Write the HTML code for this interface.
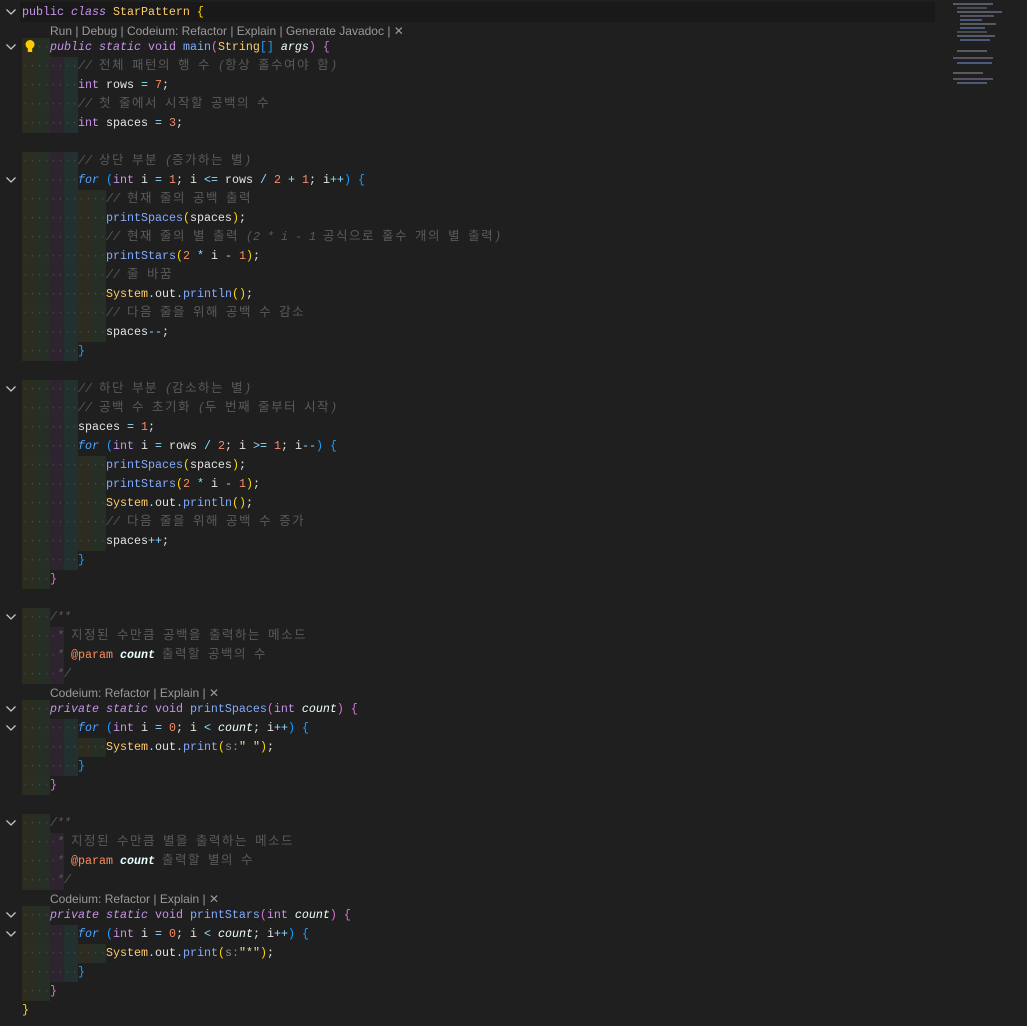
<!DOCTYPE html>
<html><head><meta charset="utf-8"><style>
html,body{margin:0;padding:0;background:#1f1f1f;width:1027px;height:1026px;overflow:hidden}
#ed{position:absolute;left:22px;top:3px;font-family:"Liberation Mono","Noto Sans CJK KR",monospace;font-size:11.67px;color:#e4e4e4}
.l{height:19px;line-height:19px;white-space:pre;overflow:hidden}
.lens{height:16px;line-height:18px;white-space:pre;font-family:"Liberation Sans","DejaVu Sans",sans-serif;font-size:12px;color:#9a9a9a;padding-left:28px}
i{font-style:normal;color:#444;display:inline-block;width:14px;height:19px;vertical-align:top}
.a{background:#2c2c20}.b{background:#252f25}.c{background:#2e2430}.d{background:#22302f}
span.c{display:inline-block;width:14px;height:19px;vertical-align:top}
.k{color:#c792ea}.it{font-style:italic}
.f{color:#4fa6ff;font-style:italic}
.t{color:#ffcb6b}.m{color:#82aaff}.o{color:#89ddff}.n{color:#f78c6c}
.cm{color:#5a5a5a;font-style:italic}
b.ko{font-weight:normal;font-family:"Noto Sans CJK KR",sans-serif;font-size:12.5px;letter-spacing:1.5px;font-style:normal;line-height:0}
.p{font-style:italic;color:#eeffff}.pb{font-style:italic;font-weight:bold;color:#eeffff}
.pa{color:#ff8b5a}
.b1{color:#ffd700}.b2{color:#da70d6}.b3{color:#179fff}
.h{color:#8b8b8b}.s{color:#e8d9a6}
.chev{position:absolute;left:5px;width:12px;height:8px}
#band{position:absolute;left:20px;top:2px;width:915px;height:20px;background:#191919}
#mm div{position:absolute;height:2px}
</style></head><body>
<div id="band"></div>
<svg class="chev" style="top:8px" viewBox="0 0 12 8"><polyline points="1.5,1.5 6,6 10.5,1.5" fill="none" stroke="#c5c5c5" stroke-width="1.3"/></svg>
<svg class="chev" style="top:43px" viewBox="0 0 12 8"><polyline points="1.5,1.5 6,6 10.5,1.5" fill="none" stroke="#c5c5c5" stroke-width="1.3"/></svg>
<svg class="chev" style="top:176px" viewBox="0 0 12 8"><polyline points="1.5,1.5 6,6 10.5,1.5" fill="none" stroke="#c5c5c5" stroke-width="1.3"/></svg>
<svg class="chev" style="top:385px" viewBox="0 0 12 8"><polyline points="1.5,1.5 6,6 10.5,1.5" fill="none" stroke="#c5c5c5" stroke-width="1.3"/></svg>
<svg class="chev" style="top:613px" viewBox="0 0 12 8"><polyline points="1.5,1.5 6,6 10.5,1.5" fill="none" stroke="#c5c5c5" stroke-width="1.3"/></svg>
<svg class="chev" style="top:705px" viewBox="0 0 12 8"><polyline points="1.5,1.5 6,6 10.5,1.5" fill="none" stroke="#c5c5c5" stroke-width="1.3"/></svg>
<svg class="chev" style="top:724px" viewBox="0 0 12 8"><polyline points="1.5,1.5 6,6 10.5,1.5" fill="none" stroke="#c5c5c5" stroke-width="1.3"/></svg>
<svg class="chev" style="top:819px" viewBox="0 0 12 8"><polyline points="1.5,1.5 6,6 10.5,1.5" fill="none" stroke="#c5c5c5" stroke-width="1.3"/></svg>
<svg class="chev" style="top:911px" viewBox="0 0 12 8"><polyline points="1.5,1.5 6,6 10.5,1.5" fill="none" stroke="#c5c5c5" stroke-width="1.3"/></svg>
<svg class="chev" style="top:930px" viewBox="0 0 12 8"><polyline points="1.5,1.5 6,6 10.5,1.5" fill="none" stroke="#c5c5c5" stroke-width="1.3"/></svg>
<div id="ed">
<div class="l"><span class="k">public</span> <span class="k it">class</span> <span class="t">StarPattern</span> <span class="b1">{</span></div>
<div class="lens">Run | Debug | Codeium: Refactor | Explain | Generate Javadoc | ✕</div>
<div class="l"><i class="a"> </i><i class="b">··</i><span class="k it">public</span> <span class="k it">static</span> <span class="k">void</span> <span class="m">main</span><span class="b2">(</span><span class="t">String</span><span class="b3">[]</span> <span class="p">args</span><span class="b2">)</span> <span class="b2">{</span></div>
<div class="l"><i class="a">··</i><i class="b">··</i><i class="c">··</i><i class="d">··</i><span class="cm">// <b class="ko">전체</b> <b class="ko">패턴의</b> <b class="ko">행</b> <b class="ko">수</b> (<b class="ko">항상</b> <b class="ko">홀수여야</b> <b class="ko">함</b>)</span></div>
<div class="l"><i class="a">··</i><i class="b">··</i><i class="c">··</i><i class="d">··</i><span class="k">int</span> rows <span class="o">=</span> <span class="n">7</span>;</div>
<div class="l"><i class="a">··</i><i class="b">··</i><i class="c">··</i><i class="d">··</i><span class="cm">// <b class="ko">첫</b> <b class="ko">줄에서</b> <b class="ko">시작할</b> <b class="ko">공백의</b> <b class="ko">수</b></span></div>
<div class="l"><i class="a">··</i><i class="b">··</i><i class="c">··</i><i class="d">··</i><span class="k">int</span> spaces <span class="o">=</span> <span class="n">3</span>;</div>
<div class="l"> </div>
<div class="l"><i class="a">··</i><i class="b">··</i><i class="c">··</i><i class="d">··</i><span class="cm">// <b class="ko">상단</b> <b class="ko">부분</b> (<b class="ko">증가하는</b> <b class="ko">별</b>)</span></div>
<div class="l"><i class="a">··</i><i class="b">··</i><i class="c">··</i><i class="d">··</i><span class="f">for</span> <span class="b3">(</span><span class="k">int</span> i <span class="o">=</span> <span class="n">1</span>; i <span class="o">&lt;=</span> rows <span class="o">/</span> <span class="n">2</span> <span class="o">+</span> <span class="n">1</span>; i<span class="o">++</span><span class="b3">)</span> <span class="b3">{</span></div>
<div class="l"><i class="a">··</i><i class="b">··</i><i class="c">··</i><i class="d">··</i><i class="a">··</i><i class="b">··</i><span class="cm">// <b class="ko">현재</b> <b class="ko">줄의</b> <b class="ko">공백</b> <b class="ko">출력</b></span></div>
<div class="l"><i class="a">··</i><i class="b">··</i><i class="c">··</i><i class="d">··</i><i class="a">··</i><i class="b">··</i><span class="m">printSpaces</span><span class="b1">(</span>spaces<span class="b1">)</span>;</div>
<div class="l"><i class="a">··</i><i class="b">··</i><i class="c">··</i><i class="d">··</i><i class="a">··</i><i class="b">··</i><span class="cm">// <b class="ko">현재</b> <b class="ko">줄의</b> <b class="ko">별</b> <b class="ko">출력</b> (2 * i - 1 <b class="ko">공식으로</b> <b class="ko">홀수</b> <b class="ko">개의</b> <b class="ko">별</b> <b class="ko">출력</b>)</span></div>
<div class="l"><i class="a">··</i><i class="b">··</i><i class="c">··</i><i class="d">··</i><i class="a">··</i><i class="b">··</i><span class="m">printStars</span><span class="b1">(</span><span class="n">2</span> <span class="o">*</span> i <span class="o">-</span> <span class="n">1</span><span class="b1">)</span>;</div>
<div class="l"><i class="a">··</i><i class="b">··</i><i class="c">··</i><i class="d">··</i><i class="a">··</i><i class="b">··</i><span class="cm">// <b class="ko">줄</b> <b class="ko">바꿈</b></span></div>
<div class="l"><i class="a">··</i><i class="b">··</i><i class="c">··</i><i class="d">··</i><i class="a">··</i><i class="b">··</i><span class="t">System</span><span class="o">.</span>out<span class="o">.</span><span class="m">println</span><span class="b1">()</span>;</div>
<div class="l"><i class="a">··</i><i class="b">··</i><i class="c">··</i><i class="d">··</i><i class="a">··</i><i class="b">··</i><span class="cm">// <b class="ko">다음</b> <b class="ko">줄을</b> <b class="ko">위해</b> <b class="ko">공백</b> <b class="ko">수</b> <b class="ko">감소</b></span></div>
<div class="l"><i class="a">··</i><i class="b">··</i><i class="c">··</i><i class="d">··</i><i class="a">··</i><i class="b">··</i>spaces<span class="o">--</span>;</div>
<div class="l"><i class="a">··</i><i class="b">··</i><i class="c">··</i><i class="d">··</i><span class="b3">}</span></div>
<div class="l"> </div>
<div class="l"><i class="a">··</i><i class="b">··</i><i class="c">··</i><i class="d">··</i><span class="cm">// <b class="ko">하단</b> <b class="ko">부분</b> (<b class="ko">감소하는</b> <b class="ko">별</b>)</span></div>
<div class="l"><i class="a">··</i><i class="b">··</i><i class="c">··</i><i class="d">··</i><span class="cm">// <b class="ko">공백</b> <b class="ko">수</b> <b class="ko">초기화</b> (<b class="ko">두</b> <b class="ko">번째</b> <b class="ko">줄부터</b> <b class="ko">시작</b>)</span></div>
<div class="l"><i class="a">··</i><i class="b">··</i><i class="c">··</i><i class="d">··</i>spaces <span class="o">=</span> <span class="n">1</span>;</div>
<div class="l"><i class="a">··</i><i class="b">··</i><i class="c">··</i><i class="d">··</i><span class="f">for</span> <span class="b3">(</span><span class="k">int</span> i <span class="o">=</span> rows <span class="o">/</span> <span class="n">2</span>; i <span class="o">&gt;=</span> <span class="n">1</span>; i<span class="o">--</span><span class="b3">)</span> <span class="b3">{</span></div>
<div class="l"><i class="a">··</i><i class="b">··</i><i class="c">··</i><i class="d">··</i><i class="a">··</i><i class="b">··</i><span class="m">printSpaces</span><span class="b1">(</span>spaces<span class="b1">)</span>;</div>
<div class="l"><i class="a">··</i><i class="b">··</i><i class="c">··</i><i class="d">··</i><i class="a">··</i><i class="b">··</i><span class="m">printStars</span><span class="b1">(</span><span class="n">2</span> <span class="o">*</span> i <span class="o">-</span> <span class="n">1</span><span class="b1">)</span>;</div>
<div class="l"><i class="a">··</i><i class="b">··</i><i class="c">··</i><i class="d">··</i><i class="a">··</i><i class="b">··</i><span class="t">System</span><span class="o">.</span>out<span class="o">.</span><span class="m">println</span><span class="b1">()</span>;</div>
<div class="l"><i class="a">··</i><i class="b">··</i><i class="c">··</i><i class="d">··</i><i class="a">··</i><i class="b">··</i><span class="cm">// <b class="ko">다음</b> <b class="ko">줄을</b> <b class="ko">위해</b> <b class="ko">공백</b> <b class="ko">수</b> <b class="ko">증가</b></span></div>
<div class="l"><i class="a">··</i><i class="b">··</i><i class="c">··</i><i class="d">··</i><i class="a">··</i><i class="b">··</i>spaces<span class="o">++</span>;</div>
<div class="l"><i class="a">··</i><i class="b">··</i><i class="c">··</i><i class="d">··</i><span class="b3">}</span></div>
<div class="l"><i class="a">··</i><i class="b">··</i><span class="b2">}</span></div>
<div class="l"> </div>
<div class="l"><i class="a">··</i><i class="b">··</i><span class="cm">/**</span></div>
<div class="l"><i class="a">··</i><i class="b">··</i><span class="c"><span style="color:#444">·</span><span class="cm">*</span></span><span class="cm"> <b class="ko">지정된</b> <b class="ko">수만큼</b> <b class="ko">공백을</b> <b class="ko">출력하는</b> <b class="ko">메소드</b></span></div>
<div class="l"><i class="a">··</i><i class="b">··</i><span class="c"><span style="color:#444">·</span><span class="cm">*</span></span> <span class="pa">@param</span> <span class="pb">count</span> <span class="cm"><b class="ko">출력할</b> <b class="ko">공백의</b> <b class="ko">수</b></span></div>
<div class="l"><i class="a">··</i><i class="b">··</i><span class="c"><span style="color:#444">·</span><span class="cm">*</span></span><span class="cm">/</span></div>
<div class="lens">Codeium: Refactor | Explain | ✕</div>
<div class="l"><i class="a">··</i><i class="b">··</i><span class="k it">private</span> <span class="k it">static</span> <span class="k">void</span> <span class="m">printSpaces</span><span class="b2">(</span><span class="k">int</span> <span class="p">count</span><span class="b2">)</span> <span class="b2">{</span></div>
<div class="l"><i class="a">··</i><i class="b">··</i><i class="c">··</i><i class="d">··</i><span class="f">for</span> <span class="b3">(</span><span class="k">int</span> i <span class="o">=</span> <span class="n">0</span>; i <span class="o">&lt;</span> <span class="p">count</span>; i<span class="o">++</span><span class="b3">)</span> <span class="b3">{</span></div>
<div class="l"><i class="a">··</i><i class="b">··</i><i class="c">··</i><i class="d">··</i><i class="a">··</i><i class="b">··</i><span class="t">System</span><span class="o">.</span>out<span class="o">.</span><span class="m">print</span><span class="b1">(</span><span class="h">s:</span><span class="s">" "</span><span class="b1">)</span>;</div>
<div class="l"><i class="a">··</i><i class="b">··</i><i class="c">··</i><i class="d">··</i><span class="b3">}</span></div>
<div class="l"><i class="a">··</i><i class="b">··</i><span class="b2">}</span></div>
<div class="l"> </div>
<div class="l"><i class="a">··</i><i class="b">··</i><span class="cm">/**</span></div>
<div class="l"><i class="a">··</i><i class="b">··</i><span class="c"><span style="color:#444">·</span><span class="cm">*</span></span><span class="cm"> <b class="ko">지정된</b> <b class="ko">수만큼</b> <b class="ko">별을</b> <b class="ko">출력하는</b> <b class="ko">메소드</b></span></div>
<div class="l"><i class="a">··</i><i class="b">··</i><span class="c"><span style="color:#444">·</span><span class="cm">*</span></span> <span class="pa">@param</span> <span class="pb">count</span> <span class="cm"><b class="ko">출력할</b> <b class="ko">별의</b> <b class="ko">수</b></span></div>
<div class="l"><i class="a">··</i><i class="b">··</i><span class="c"><span style="color:#444">·</span><span class="cm">*</span></span><span class="cm">/</span></div>
<div class="lens">Codeium: Refactor | Explain | ✕</div>
<div class="l"><i class="a">··</i><i class="b">··</i><span class="k it">private</span> <span class="k it">static</span> <span class="k">void</span> <span class="m">printStars</span><span class="b2">(</span><span class="k">int</span> <span class="p">count</span><span class="b2">)</span> <span class="b2">{</span></div>
<div class="l"><i class="a">··</i><i class="b">··</i><i class="c">··</i><i class="d">··</i><span class="f">for</span> <span class="b3">(</span><span class="k">int</span> i <span class="o">=</span> <span class="n">0</span>; i <span class="o">&lt;</span> <span class="p">count</span>; i<span class="o">++</span><span class="b3">)</span> <span class="b3">{</span></div>
<div class="l"><i class="a">··</i><i class="b">··</i><i class="c">··</i><i class="d">··</i><i class="a">··</i><i class="b">··</i><span class="t">System</span><span class="o">.</span>out<span class="o">.</span><span class="m">print</span><span class="b1">(</span><span class="h">s:</span><span class="s">"*"</span><span class="b1">)</span>;</div>
<div class="l"><i class="a">··</i><i class="b">··</i><i class="c">··</i><i class="d">··</i><span class="b3">}</span></div>
<div class="l"><i class="a">··</i><i class="b">··</i><span class="b2">}</span></div>
<div class="l"><span class="b1">}</span></div>
</div>
<svg style="position:absolute;left:24px;top:39px;width:12px;height:15px" viewBox="0 0 12 15"><circle cx="6" cy="5.5" r="4.5" fill="#ffcc00"/><rect x="3.8" y="9" width="4.4" height="4" fill="#ffcc00"/></svg>
<div id="mm">
<div style="left:953px;top:3px;width:40px;background:#555a6a"></div>
<div style="left:957px;top:7px;width:30px;background:#4a4a4a"></div>
<div style="left:957px;top:11px;width:45px;background:#555a6a"></div>
<div style="left:960px;top:15px;width:34px;background:#5a5060"></div>
<div style="left:960px;top:19px;width:22px;background:#4a5a7a"></div>
<div style="left:960px;top:23px;width:36px;background:#5a5a5a"></div>
<div style="left:960px;top:27px;width:25px;background:#4a5a7a"></div>
<div style="left:957px;top:31px;width:30px;background:#4a4a4a"></div>
<div style="left:957px;top:35px;width:38px;background:#555a6a"></div>
<div style="left:960px;top:39px;width:30px;background:#4a5a7a"></div>
<div style="left:957px;top:50px;width:30px;background:#5a5a5a"></div>
<div style="left:953px;top:57px;width:40px;background:#5a5060"></div>
<div style="left:957px;top:62px;width:35px;background:#4a5a7a"></div>
<div style="left:953px;top:72px;width:30px;background:#5a5a5a"></div>
<div style="left:953px;top:78px;width:40px;background:#5a5060"></div>
<div style="left:957px;top:82px;width:30px;background:#4a5a7a"></div>
</div>
</body></html>
